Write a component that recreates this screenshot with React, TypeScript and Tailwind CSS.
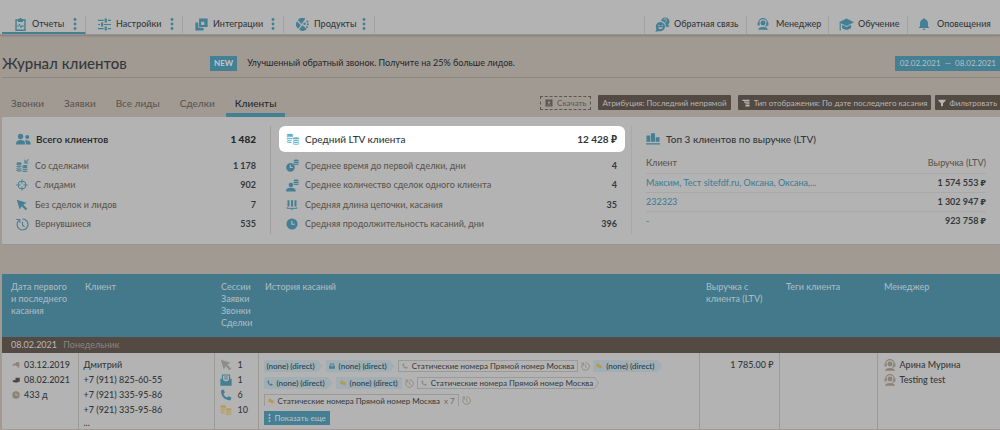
import type { ReactNode } from "react";

type IconProps = { className?: string };

const Svg = ({ className = "size-3", box = "0 0 16 16", children }: { className?: string; box?: string; children: ReactNode }) => (
  <svg viewBox={box} className={`shrink-0 ${className}`} fill="currentColor" aria-hidden="true">
    {children}
  </svg>
);

const ClipboardIcon = ({ className }: IconProps) => (
  <Svg className={className} box="0 0 14 16">
    <path d="M1.500 2.500h11V15h-11z" fill="none" stroke="currentColor" strokeWidth="1.700" />
    <path d="M4 1.200h1.600a1.400 1.400 0 0 1 2.800 0H10v3.600H4z" />
    <path d="M2.500 10h2l1.300-2.500 1.800 4.500 1.400-3 .6 1h2" fill="none" stroke="currentColor" strokeWidth="1.200" />
  </Svg>
);

const SlidersIcon = ({ className }: IconProps) => (
  <Svg className={className}>
    <path d="M0 3h7M12 3h4M0 8h2.5M7 8h9M0 13h7M12 13h4" stroke="currentColor" strokeWidth="1.500" />
    <path d="M8.200 0.600h2.600v4.800H8.200zM3.700 5.600h2.600v4.800H3.700zM8.200 10.600h2.600v4.800H8.200z" />
  </Svg>
);

const SquaresIcon = ({ className }: IconProps) => (
  <Svg className={className}>
    <path fillRule="evenodd" d="M5 .5H15.500V11H5zM7.500 4.500v4h4v-4z" />
    <path d="M.5 5.500H4V12h6.500v3.500H.5z" />
  </Svg>
);

const ProductsIcon = ({ className }: IconProps) => (
  <Svg className={className}>
    <path d="M2.200 2.500A7.200 7.200 0 0 1 11.500.9L6.800 7.300z" />
    <path d="M1.200 4A7.200 7.200 0 0 0 2.600 13.200L6 9z" />
    <path d="M3.800 14.300A7.200 7.200 0 0 0 13.300 13.600L7.800 8.800z" />
    <circle cx="10.500" cy="7" r="1.500" />
    <circle cx="14" cy="4.300" r="1.300" />
    <circle cx="14.500" cy="7.800" r="1.300" />
    <circle cx="13.500" cy="11" r="1.200" />
  </Svg>
);

const DotsIcon = ({ className = "h-3 w-1" }: IconProps) => (
  <Svg className={className} box="0 0 4 12">
    <circle cx="2" cy="1.500" r="1.400" />
    <circle cx="2" cy="6" r="1.400" />
    <circle cx="2" cy="10.500" r="1.400" />
  </Svg>
);

const FeedbackIcon = ({ className }: IconProps) => (
  <Svg className={className}>
    <path d="M6.500 4A4.500 4.500 0 1 1 14 8.200l1.500 2-4.200.4A5.500 5.500 0 0 0 6.500 4z" />
    <path d="M9.300 3.200a1.500 1.500 0 1 1 2 1.700v1" fill="none" stroke="#b3b3b3" strokeWidth="1" />
    <path fillRule="evenodd" d="M5.800 5.300a5 5 0 1 1-1.600 9.800L.4 15.800l1.100-3.100A5 5 0 0 1 5.800 5.300zM3.300 11c.6 2.600 4.600 2.600 5.200 0z" />
    <circle cx="4.100" cy="9" r=".8" fill="#b3b3b3" />
    <circle cx="7.700" cy="9" r=".8" fill="#b3b3b3" />
  </Svg>
);

const AgentIcon = ({ className }: IconProps) => (
  <Svg className={className}>
    <path d="M2.300 8.500V6.500a5.700 5.700 0 0 1 11.400 0v2c0 1.800-1.200 2.300-3 2.500" fill="none" stroke="currentColor" strokeWidth="1.500" />
    <path d="M.8 6h2.700v4H.8zM12.500 6h2.700v4h-2.700z" />
    <circle cx="8" cy="6.700" r="3.300" />
    <path d="M1.500 15.800c0-2.600 2.500-3.900 6.500-3.900s6.500 1.300 6.500 3.900z" />
  </Svg>
);

const CapIcon = ({ className }: IconProps) => (
  <Svg className={className}>
    <path d="M8 1.500 16 5.500 8 9.500 0 5.500z" />
    <path d="M3.300 8.200 8 10.600l4.900-2.400v3.600c-2.800 2.500-7 2.500-9.600 0z" />
    <path d="M1.300 6v8.500" stroke="currentColor" strokeWidth="1.200" />
  </Svg>
);

const BellIcon = ({ className }: IconProps) => (
  <Svg className={className}>
    <path d="M8 .5a1.300 1.300 0 0 1 1.300 1.200C12 2.300 13.300 4.500 13.300 7v4l2 2.300H.7L2.700 11V7c0-2.500 1.300-4.700 4-5.300A1.300 1.300 0 0 1 8 .5zM6.200 14.200h3.600a1.800 1.800 0 0 1-3.600 0z" />
  </Svg>
);

const PeopleIcon = ({ className }: IconProps) => (
  <Svg className={className} box="0 0 18 14">
    <circle cx="5.500" cy="4" r="3.200" />
    <path d="M0 13.500c0-3.700 2-5.200 5.500-5.200S11 9.800 11 13.500z" />
    <circle cx="13.500" cy="4.500" r="2.400" />
    <path d="M12 13.500c0-2-.5-3.500-1.500-4.500 3.500-1.500 7.200 0 7.200 4.500z" />
  </Svg>
);

const CoinsIcon = ({ className }: IconProps) => (
  <Svg className={className} box="0 0 18 16">
    <path
      d="M1 4c1 1.300 7 1.300 8 0M1 6.500c1 1.300 6 1.400 7.500.4M1 9c1 1.200 4 1.400 6 1.100M1 11.500c1 1.200 4 1.400 6 1.100M9 9c1 1.300 7 1.300 8 0M9 11.500c1 1.300 7 1.300 8 0M9 14c1 1.300 7 1.300 8 0"
      fill="none"
      stroke="currentColor"
      strokeWidth="1.400"
    />
    <ellipse cx="5" cy="2.500" rx="4.300" ry="1.500" />
    <ellipse cx="13" cy="7" rx="4.300" ry="1.500" />
  </Svg>
);

const DealCoinsIcon = ({ className }: IconProps) => (
  <Svg className={className}>
    <path
      d="M.7 6.500c1 1 5 1 6 0M.7 9c1 1 5 1 6 0M.7 11.500c1 1 4 1 6 .5M.7 13.800c1 1 4 1 6 .5M8 9.800c1 1 5 1 6 0M8 12.200c1 1 5 1 6 0M8 14.500c1 1 5 1 6 0"
      fill="none"
      stroke="currentColor"
      strokeWidth="1.400"
    />
    <ellipse cx="3.700" cy="5.300" rx="3.200" ry="1.200" />
    <ellipse cx="11" cy="8.500" rx="3.200" ry="1.200" />
    <path d="M15.500.5 12 4M11 1v4h4" fill="none" stroke="currentColor" strokeWidth="1.300" />
  </Svg>
);

const TargetIcon = ({ className }: IconProps) => (
  <Svg className={className}>
    <circle cx="8" cy="8" r="5.300" fill="none" stroke="currentColor" strokeWidth="1.300" />
    <path d="M8 .5V6M8 10v5.500M.5 8H6M10 8h5.500" stroke="currentColor" strokeWidth="1.300" />
  </Svg>
);

const CursorIcon = ({ className }: IconProps) => (
  <Svg className={className}>
    <path d="M1 1 14 5 9.700 7.700 15 13 13 15 7.700 9.700 5 14z" />
  </Svg>
);

const HistoryIcon = ({ className }: IconProps) => (
  <Svg className={className}>
    <path d="M3.600 3A6.700 6.700 0 1 0 8 1.300" fill="none" stroke="currentColor" strokeWidth="1.400" />
    <path d="M.3 1.800h4.500v4.500M8 4.500V8.500l2.500 2.500" fill="none" stroke="currentColor" strokeWidth="1.300" />
  </Svg>
);

const ClockIcon = ({ className }: IconProps) => (
  <Svg className={className}>
    <path fillRule="evenodd" d="M8 .6a7.400 7.400 0 1 1 0 14.800A7.400 7.400 0 0 1 8 .6zM7 3.500V9h5V7.500H8.600v-4z" />
  </Svg>
);

const ClockCoinsIcon = ({ className }: IconProps) => (
  <Svg className={className}>
    <path fillRule="evenodd" d="M5.500 5a5.300 5.300 0 1 1 0 10.600A5.300 5.300 0 0 1 5.500 5zM4.700 7v4h3.600V9.800H6V7z" />
    <ellipse cx="12.500" cy="1.800" rx="3.200" ry="1.200" />
    <path d="M9.300 3.700c1 1 5.400 1 6.400 0M9.300 6c1 1 5.400 1 6.400 0" fill="none" stroke="currentColor" strokeWidth="1.300" />
  </Svg>
);

const PersonCoinsIcon = ({ className }: IconProps) => (
  <Svg className={className}>
    <circle cx="6" cy="7.500" r="2.800" />
    <path d="M0 15.500c0-3.300 2-4.600 6-4.600s6 1.300 6 4.600z" />
    <ellipse cx="12.500" cy="1.800" rx="3.200" ry="1.200" />
    <path d="M9.300 3.700c1 1 5.400 1 6.400 0M9.300 6c1 1 5.400 1 6.400 0" fill="none" stroke="currentColor" strokeWidth="1.300" />
  </Svg>
);

const ChainIcon = ({ className }: IconProps) => (
  <Svg className={className}>
    <path d="M2 1.500h2.700v8.500H2zM6.700 1.500h2.700v8.500H6.700zM11.300 1.500H14v8.500h-2.700z" />
    <path d="M1.500 11v1.500h13V11M8 12.500V15" fill="none" stroke="currentColor" strokeWidth="1.300" />
  </Svg>
);

const BarsIcon = ({ className }: IconProps) => (
  <Svg className={className} box="0 0 14 12">
    <path d="M.5 2.500h3.800v6.300H.5zM5 .3h4v8.500H5zM9.700 4.300h3.800v4.500H9.700zM0 10.300h14v1.200H0z" />
  </Svg>
);

const MailIcon = ({ className }: IconProps) => (
  <Svg className={className}>
    <path fillRule="evenodd" d="M2.500 .5h11V7l2-1.500V15.500H.5V5.500l2 1.500zM4 2v5.800l2.500 1.700h3L12 7.800V2z" />
    <path d="M5.500 4h5M5.500 6.500h5" stroke="currentColor" strokeWidth="1.200" />
  </Svg>
);

const PhoneIcon = ({ className }: IconProps) => (
  <Svg className={className}>
    <path d="M1.500 1.800 5 .8l1.500 4-1.800 1.500c.6 2.300 2.400 4.300 4.800 5l1.800-1.700 3.900 1.800-1.100 3.500C7 16 .5 9.500 1.500 1.800z" />
  </Svg>
);

const CoinPairIcon = ({ className }: IconProps) => (
  <Svg className={className}>
    <path d="M1 3c2-1.500 6-1.500 8 0v3.500c2-.8 4.500-.6 6 .5v6c-2 1.500-5.500 1.500-7 0v-2.500c-2 1-5.500 1-7-.5z" />
  </Svg>
);

const FirstTouchIcon = ({ className }: IconProps) => (
  <Svg className={className} box="0 0 16 12">
    <path d="M1 8.500C1 4.500 4 2 8 2.300V.5h6.500V11H11V7L9 8.500 7.500 6.800C5 6.500 3 7 1 8.500z" />
  </Svg>
);

const LastTouchIcon = ({ className }: IconProps) => (
  <Svg className={className} box="0 0 16 12">
    <path d="M7 1.500h8.500v7.800H12V11H6.500C3 11 1 9.500 .5 7l2 .8 1-2.300 3.500 1z" />
  </Svg>
);

const DownloadIcon = ({ className }: IconProps) => (
  <Svg className={className}>
    <path fillRule="evenodd" d="M1 1h14v14H1zM7 3.500v3.200H4.500L8 10.200l3.500-3.500H9V3.500zM4 11.300v1.400h8v-1.400z" />
  </Svg>
);

const SortIcon = ({ className }: IconProps) => (
  <Svg className={className}>
    <path d="M1 1.500h14v2.700H1zM4 5h11v2.700H4zM7 8.500h8v2.700H7zM7 12.200h8v2.700H7z" />
  </Svg>
);

const FunnelIcon = ({ className }: IconProps) => (
  <Svg className={className}>
    <path d="M.8 1.500h14.400v2L10 8.500v5L6 15V8.500L.8 3.500z" />
  </Svg>
);

const mainNav = [
  { label: "Отчеты", Icon: ClipboardIcon, width: "w-[84px]", active: true },
  { label: "Настройки", Icon: SlidersIcon, width: "w-[97px]", active: false },
  { label: "Интеграции", Icon: SquaresIcon, width: "w-[101px]", active: false },
  { label: "Продукты", Icon: ProductsIcon, width: "w-[91px]", active: false },
];

const sideNav = [
  { label: "Обратная связь", Icon: FeedbackIcon, width: "w-[102px]", icon: "size-[15px]" },
  { label: "Менеджер", Icon: AgentIcon, width: "w-[82px]", icon: "size-3 mr-[3px]" },
  { label: "Обучение", Icon: CapIcon, width: "w-[79px]", icon: "size-[15px]" },
  { label: "Оповещения", Icon: BellIcon, width: "w-[93px]", icon: "size-3 mr-[3px]" },
];

const tabs = ["Звонки", "Заявки", "Все лиды", "Сделки", "Клиенты"];

const clientStats = [
  { label: "Со сделками", value: "1 178", Icon: DealCoinsIcon, icon: "size-[13px]" },
  { label: "С лидами", value: "902", Icon: TargetIcon, icon: "size-3" },
  { label: "Без сделок и лидов", value: "7", Icon: CursorIcon, icon: "size-3" },
  { label: "Вернувшиеся", value: "535", Icon: HistoryIcon, icon: "size-[13px]" },
];

const dealStats = [
  { label: "Среднее время до первой сделки, дни", value: "4", Icon: ClockCoinsIcon, icon: "size-[13px]" },
  { label: "Среднее количество сделок одного клиента", value: "4", Icon: PersonCoinsIcon, icon: "size-[13px]" },
  { label: "Средняя длина цепочки, касания", value: "35", Icon: ChainIcon, icon: "size-3" },
  { label: "Средняя продолжительность касаний, дни", value: "396", Icon: ClockIcon, icon: "size-3" },
];

const topClients = [
  { name: "Максим, Тест sitefdf.ru, Оксана, Оксана,...", revenue: "1 574 553 ₽" },
  { name: "232323", revenue: "1 302 947 ₽" },
  { name: "-", revenue: "923 758 ₽" },
];

type Stat = { label: string; value: string; Icon: (p: IconProps) => ReactNode; icon: string };

const StatList = ({ items }: { items: Stat[] }) => (
  <dl className="mt-1 grid h-[78px] auto-rows-fr">
    {items.map(({ label, value, Icon, icon }) => (
      <div key={label} className="flex items-center">
        <span className="flex w-[19px] text-[#447f94]">
          <Icon className={icon} />
        </span>
        <dt className="text-[9px] font-medium text-[#5d564f]">{label}</dt>
        <dd className="ml-auto text-[9px] font-bold text-[#33393b]">{value}</dd>
      </div>
    ))}
  </dl>
);

const Arrow = ({ children }: { children: ReactNode }) => (
  <span className="flex h-3 items-center gap-1 bg-[#a1aeb4] pr-2 pl-[3px] text-[#1f3f50] [clip-path:polygon(0_0,calc(100%-5px)_0,100%_50%,calc(100%-5px)_100%,0_100%)]">
    {children}
  </span>
);

const Head = ({ children }: { children: ReactNode }) => (
  <th scope="col" className="px-[7px] pt-[7px] pb-2 text-left font-medium first:pl-[9px]">
    {children}
  </th>
);

export default function App() {
  return (
    <div className="h-screen overflow-hidden bg-[#a09a93] font-['Lato','Noto_Sans',sans-serif] text-[9px] leading-3 text-[#33393b]">
      <header className="flex h-[35px] justify-between border-b border-[#96938f] bg-[#b3b3b3] pt-4 pl-0.5 shadow-[0_1px_2px_#00000030]">
        <nav className="flex">
          {mainNav.map(({ label, Icon, width, active }) => (
            <div
              key={label}
              className={`${width} flex items-center justify-between border-r border-r-[#a1a1a1] border-b-2 pr-2 pl-3 ${active ? "border-b-[#447f94]" : "border-b-transparent"}`}
            >
              <a href="#" className="flex items-center gap-[5px] text-[9px] font-medium">
                <Icon className="size-[13px] text-[#447f94]" />
                {label}
              </a>
              <button type="button" aria-label={`Меню: ${label}`} className="text-[#447f94]">
                <DotsIcon />
              </button>
            </div>
          ))}
        </nav>
        <nav className="flex">
          {sideNav.map(({ label, Icon, width, icon }) => (
            <a
              key={label}
              href="#"
              className={`${width} flex items-center gap-1 border-l border-[#a1a1a1] pb-0.5 pl-[10px] text-[9px] font-medium whitespace-nowrap`}
            >
              <Icon className={`${icon} text-[#447f94]`} />
              {label}
            </a>
          ))}
        </nav>
      </header>

      <section className="ml-0.5 flex h-[43px] items-center border-b border-[#8e8882] pt-[14px]">
        <h1 className="w-[208px] text-[15px] leading-5 font-medium">Журнал клиентов</h1>
        <span className="h-[15px] bg-[#447f94] px-1 text-[8px] leading-[15px] font-bold text-[#c3c8ca]">NEW</span>
        <p className="ml-[10px] text-[9px] text-[#222729]">Улучшенный обратный звонок. Получите на 25% больше лидов.</p>
        <button type="button" className="ml-auto h-[15px] bg-[#447f94] pr-1 pl-[5px] text-[8px] whitespace-pre text-[#b6c1c5]">
          02.02.2021  —  08.02.2021
        </button>
      </section>

      <section className="ml-0.5 flex h-[39px] items-end">
        <nav className="flex gap-5 pl-[9px]">
          {tabs.map((tab) => (
            <a
              key={tab}
              href="#"
              className={`border-b-4 pb-[2px] text-[10px] leading-4 font-medium ${tab === "Клиенты" ? "-mx-[9px] border-[#447f94] px-[9px] text-[#26292a]" : "border-transparent text-[#5d564f]"}`}
            >
              {tab}
            </a>
          ))}
        </nav>
        <div className="mb-[7px] ml-auto flex items-center text-[8px] whitespace-nowrap text-[#b9b5b0]">
          <button type="button" className="mr-[7px] flex h-[14px] items-center gap-1 border border-dashed border-[#5d564f] px-1 text-[#5d564f]">
            <DownloadIcon className="size-2" />
            Скачать
          </button>
          <button type="button" className="mr-[7px] h-[15px] rounded-[1px] bg-[#534a43] px-1">
            Атрибуция: Последний непрямой
          </button>
          <button type="button" className="mr-1 flex h-[15px] items-center gap-1 rounded-[1px] bg-[#534a43] px-1">
            <SortIcon className="size-2" />
            Тип отображения: По дате последнего касания
          </button>
          <button type="button" className="flex h-[15px] items-center gap-[3px] rounded-l-[1px] bg-[#534a43] px-[3px]">
            <FunnelIcon className="size-2" />
            Фильтровать
          </button>
        </div>
      </section>

      <main className="ml-0.5">
        <section className="flex border-b border-[#989694] bg-[#b3b3b3] pt-[9px] pb-[10px]">
          <div className="w-[269px] shrink-0 border-r border-[#a19e9b] pr-[14px] pl-[14px]">
            <h2 className="flex h-[26px] items-center text-[10px] font-semibold text-[#222729]">
              <span className="flex w-5 text-[#447f94]">
                <PeopleIcon className="h-3 w-[15px]" />
              </span>
              Всего клиентов
              <strong className="ml-auto">1 482</strong>
            </h2>
            <StatList items={clientStats} />
          </div>
          <div className="min-w-0 flex-[1_1_361px] border-r border-[#a8a8a8] pr-[6px] pl-2">
            <h2 className="flex h-[26px] items-center rounded-md bg-white pr-2 pl-[7px] text-[10px] font-medium text-[#33393b]">
              <span className="flex w-[19px] text-[#5fb2ce]">
                <CoinsIcon className="h-3 w-[14px]" />
              </span>
              Средний LTV клиента
              <strong className="ml-auto">12 428 ₽</strong>
            </h2>
            <div className="pr-2 pl-[7px]">
              <StatList items={dealStats} />
            </div>
          </div>
          <div className="min-w-0 flex-[1_1_368px] pr-[14px] pl-[14px]">
            <h2 className="flex h-[26px] items-center text-[10px] font-medium text-[#33393b]">
              <span className="flex w-5 text-[#447f94]">
                <BarsIcon className="h-3 w-[14px]" />
              </span>
              Топ 3 клиентов по выручке (LTV)
            </h2>
            <table className="mt-0.5 w-full">
              <thead>
                <tr className="h-[19px] border-b border-[#a9a9a9] text-[#5d564f]">
                  <th scope="col" className="text-left font-medium">
                    Клиент
                  </th>
                  <th scope="col" className="text-right font-medium">
                    Выручка (LTV)
                  </th>
                </tr>
              </thead>
              <tbody>
                {topClients.map(({ name, revenue }) => (
                  <tr key={name} className="h-[19px] border-b border-[#a9a9a9] last:border-0">
                    <td>
                      <a href="#" className="font-medium text-[#447f94]">
                        {name}
                      </a>
                    </td>
                    <td className="text-right font-bold">{revenue}</td>
                  </tr>
                ))}
              </tbody>
            </table>
          </div>
        </section>

        <table className="mt-[29px] w-full table-fixed">
          <colgroup>
            <col className="w-[76px]" />
            <col className="w-[136px]" />
            <col className="w-[44px]" />
            <col />
            <col className="w-[80px]" />
            <col className="w-[98px]" />
            <col className="w-[123px]" />
          </colgroup>
          <thead className="bg-[#44798c] align-top text-[#a9bac1]">
            <tr>
              <Head>
                Дата первого
                <br />и последнего
                <br />
                касания
              </Head>
              <Head>Клиент</Head>
              <Head>
                Сессии
                <br />
                Заявки
                <br />
                Звонки
                <br />
                Сделки
              </Head>
              <Head>История касаний</Head>
              <Head>
                Выручка с<br />
                клиента (LTV)
              </Head>
              <Head>Теги клиента</Head>
              <Head>Менеджер</Head>
            </tr>
          </thead>
          <tbody className="align-top leading-[15px]">
            <tr className="bg-[#534a43]">
              <td colSpan={7} className="px-[9px] leading-4 text-[#bab7b4]">
                08.02.2021 <span className="ml-1 text-[#8b857f]">Понедельник</span>
              </td>
            </tr>
            <tr className="divide-x divide-[#9d9a96] bg-[#b3b3b3] font-medium">
              <td className="pt-1 pl-[10px]">
                <div className="flex items-center gap-1">
                  <FirstTouchIcon className="size-2 text-[#8b8175]" />
                  03.12.2019
                </div>
                <div className="flex items-center gap-1">
                  <LastTouchIcon className="size-2 text-[#4c4641]" />
                  08.02.2021
                </div>
                <div className="flex items-center gap-1">
                  <ClockIcon className="size-2 text-[#8b8175]" />
                  433 д
                </div>
              </td>
              <td className="pt-1 pl-[5px]">
                <p>Дмитрий</p>
                <p>+7 (911) 825-60-55</p>
                <p>+7 (921) 335-95-86</p>
                <p>+7 (921) 335-95-86</p>
                <p className="leading-3">...</p>
              </td>
              <td className="pt-1 pl-[5px]">
                <div className="flex items-center gap-[6px]">
                  <CursorIcon className="size-3 text-[#8d8c8a]" />1
                </div>
                <div className="flex items-center gap-[6px]">
                  <MailIcon className="size-3 text-[#447f94]" />1
                </div>
                <div className="flex items-center gap-[6px]">
                  <PhoneIcon className="size-3 text-[#447f94]" />6
                </div>
                <div className="flex items-center gap-[6px]">
                  <CoinsIcon className="size-3 text-[#b39a4c]" />
                  10
                </div>
              </td>
              <td className="pt-[7px] pl-[5px] text-[8px] leading-[10px] whitespace-nowrap">
                <div className="flex flex-col gap-[5px]">
                  <div className="flex items-center gap-[3px]">
                    <Arrow>(none) (direct)</Arrow>
                    <Arrow>
                      <MailIcon className="size-[6px] text-[#447f94]" />
                      (none) (direct)
                    </Arrow>
                    <span className="flex h-3 items-center gap-1 border border-[#9b9a98] px-[3px] font-normal">
                      <PhoneIcon className="size-[6px] text-[#8d8c8a]" />
                      Статические номера Прямой номер Москва
                    </span>
                    <HistoryIcon className="size-[9px] text-[#8b8175]" />
                    <Arrow>
                      <CoinPairIcon className="size-[6px] text-[#b39a4c]" />
                      (none) (direct)
                    </Arrow>
                  </div>
                  <div className="flex items-center gap-[3px]">
                    <Arrow>
                      <PhoneIcon className="size-[6px] text-[#447f94]" />
                      (none) (direct)
                    </Arrow>
                    <span className="flex h-3 items-center gap-1 bg-[#a1aeb4] px-1 text-[#1f3f50]">
                      <CoinPairIcon className="size-[6px] text-[#b39a4c]" />
                      (none) (direct)
                    </span>
                    <HistoryIcon className="size-[9px] text-[#8b8175]" />
                    <span className="flex font-normal">
                      <span className="flex h-3 items-center gap-1 border border-r-0 border-[#9b9a98] pl-[3px]">
                        <PhoneIcon className="size-[6px] text-[#8d8c8a]" />
                        Статические номера Прямой номер Москва
                      </span>
                      <svg viewBox="0 0 6 12" className="h-3 w-[6px]" fill="none" stroke="#9b9a98" aria-hidden="true">
                        <path d="M0 .5h1.500L5.500 6 1.500 11.500H0" />
                      </svg>
                    </span>
                  </div>
                  <div className="flex items-center gap-[3px]">
                    <span className="flex h-3 items-center gap-1 border border-b-0 border-[#9b9a98] px-[3px] font-normal">
                      <CoinPairIcon className="size-[6px] text-[#b39a4c]" />
                      Статические номера Прямой номер Москва
                      <span className="text-[#6e6a66]">x 7</span>
                    </span>
                    <HistoryIcon className="size-[9px] text-[#8b8175]" />
                  </div>
                  <button type="button" className="flex h-[14px] items-center gap-1 self-start bg-[#447f94] px-1 text-[#b6c1c5]">
                    <DotsIcon className="h-2 w-[3px]" />
                    Показать еще
                  </button>
                </div>
              </td>
              <td className="pt-1 pr-[5px] text-right">1 785.00 ₽</td>
              <td />
              <td className="pt-1 pl-[6px]">
                <div className="flex items-center gap-1">
                  <AgentIcon className="size-3 text-[#8b8175]" />
                  Арина Мурина
                </div>
                <div className="flex items-center gap-1">
                  <AgentIcon className="size-3 text-[#8b8175]" />
                  Testing test
                </div>
              </td>
            </tr>
          </tbody>
        </table>
      </main>
    </div>
  );
}
